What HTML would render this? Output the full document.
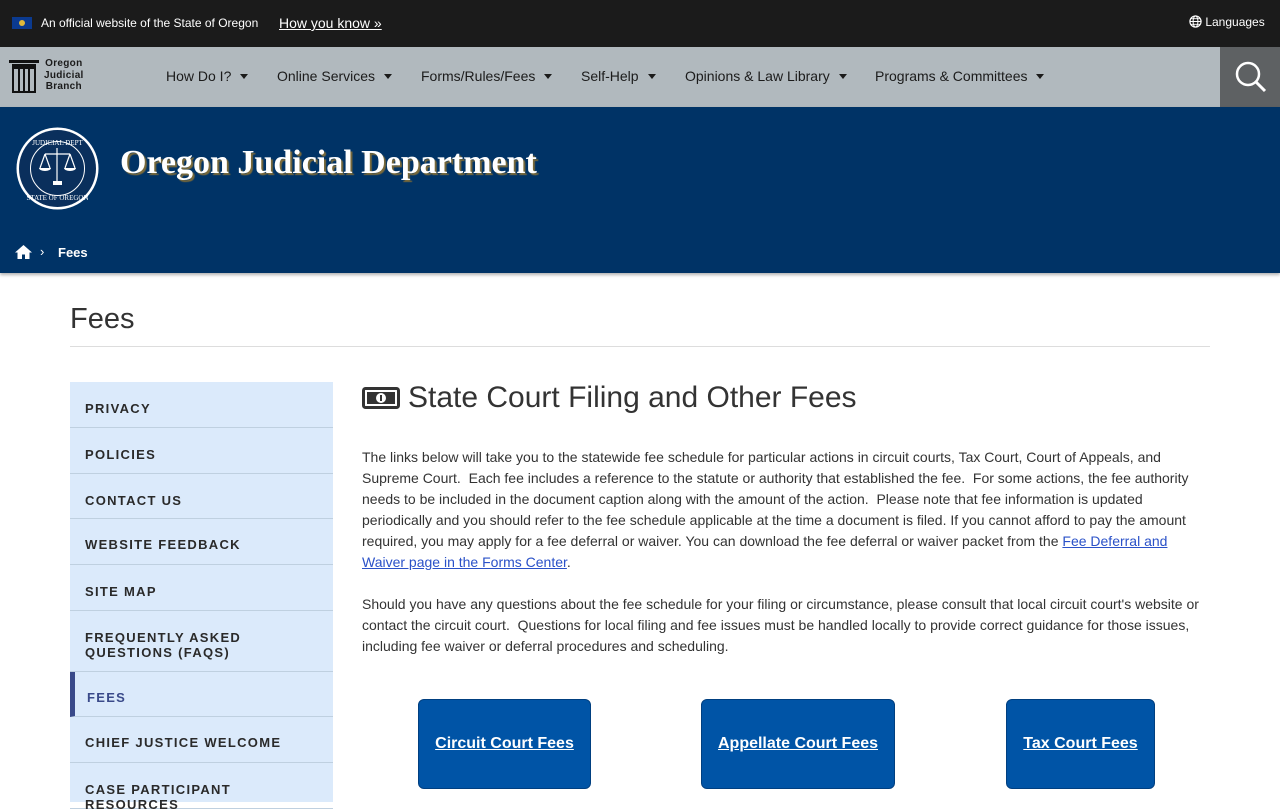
<!DOCTYPE html>
<html><head><meta charset="utf-8"><style>
*{box-sizing:border-box;margin:0;padding:0}
body{width:1280px;height:800px;overflow:hidden;font-family:"Liberation Sans",Arial,sans-serif;background:#fff;position:relative}
.top{position:absolute;left:0;top:0;width:1280px;height:47px;background:#1b1b1b;color:#fff;font-size:12px}
.nav{position:absolute;left:0;top:47px;width:1280px;height:60px;background:#b1b9be}
.nav .it{position:absolute;top:21px;font-size:14px;color:#1b1b1b}
.nav .it:after{content:"";display:inline-block;margin-left:9px;border-left:4.5px solid transparent;border-right:4.5px solid transparent;border-top:5px solid #1b1b1b;vertical-align:2px}
.hdr{position:absolute;left:0;top:107px;width:1280px;height:166px;background:#003366;box-shadow:0 2px 3px rgba(0,0,0,.3)}
.side{position:absolute;left:70px;top:382px;width:263px;height:420px;background:#dbeafb}
.side div{position:absolute;left:0;width:263px;border-bottom:1px solid #bfd0e0;font-size:13px;font-weight:bold;letter-spacing:1.3px;color:#2a2a2a;padding-left:15px}
p{font-size:14px;line-height:21px;color:#333}
a{color:#2a51c8}
.btn{position:absolute;top:699px;height:90px;background:#0054a6;border-radius:6px;color:#fff;font-weight:bold;font-size:16px;text-decoration:underline;display:flex;align-items:center;justify-content:center;border:1px solid #003f80}
</style></head><body>
<div class="top">
<div style="position:absolute;left:12px;top:17px;width:20px;height:12px;background:#0b3a8f"><div style="position:absolute;left:7px;top:3px;width:6px;height:6px;border-radius:50%;background:#e0b93a"></div></div>
<span style="position:absolute;left:41px;top:16px">An official website of the State of Oregon</span>
<span style="position:absolute;left:279px;top:15px;font-size:14px;text-decoration:underline">How you know »</span>
<span style="position:absolute;left:1189px;top:15px;font-size:12px"><svg width="13" height="13" viewBox="0 0 14 14" style="vertical-align:-2px"><circle cx="7" cy="7" r="6" fill="none" stroke="#fff" stroke-width="1.3"/><ellipse cx="7" cy="7" rx="2.6" ry="6" fill="none" stroke="#fff" stroke-width="1.1"/><path d="M1 7h12M2 4h10M2 10h10" stroke="#fff" stroke-width="1"/></svg> Languages</span>
</div>
<div class="nav">
<svg style="position:absolute;left:9px;top:13px" width="30" height="33" viewBox="0 0 30 33"><rect x="0" y="0" width="30" height="3" fill="#111"/><rect x="3" y="4" width="24" height="3" fill="#111"/><rect x="4" y="8" width="22" height="24" fill="none" stroke="#111" stroke-width="2"/><path d="M10 9v22M15 9v22M20 9v22" stroke="#111" stroke-width="2"/></svg>
<div style="position:absolute;left:44px;top:11px;font-size:10px;font-weight:bold;line-height:11.5px;text-align:center;color:#1b1b1b;letter-spacing:.3px">Oregon<br>Judicial<br>Branch</div>
<span class="it" style="left:166px">How Do I?</span>
<span class="it" style="left:277px">Online Services</span>
<span class="it" style="left:421px">Forms/Rules/Fees</span>
<span class="it" style="left:581px">Self-Help</span>
<span class="it" style="left:685px">Opinions &amp; Law Library</span>
<span class="it" style="left:875px">Programs &amp; Committees</span>
<div style="position:absolute;left:1220px;top:0;width:60px;height:60px;background:#5e6163"><svg width="60" height="60"><circle cx="28" cy="27" r="11" fill="none" stroke="#fff" stroke-width="2.5"/><path d="M36 35l9 9" stroke="#fff" stroke-width="3"/></svg></div>
</div>
<div class="hdr">
<svg style="position:absolute;left:15px;top:19px" width="85" height="85" viewBox="0 0 85 85"><circle cx="42.5" cy="42.5" r="41" fill="#fff"/><circle cx="42.5" cy="42.5" r="38.5" fill="#0a2f5c"/><circle cx="42.5" cy="42.5" r="27" fill="none" stroke="#fff" stroke-width="1"/><path d="M42 22v34M30 28h25M30 28l-5 14M30 28l5 14M55 28l-5 14M55 28l5 14" stroke="#fff" stroke-width="1.2" fill="none"/><path d="M24 42h12a6 3 0 0 1-12 0zM49 42h12a6 3 0 0 1-12 0z" fill="#fff"/><rect x="38" y="55" width="9" height="4" fill="#fff"/><text x="42.5" y="19" fill="#fff" font-size="7" text-anchor="middle" font-family="Liberation Serif">JUDICIAL DEPT</text><text x="42.5" y="74" fill="#fff" font-size="7" text-anchor="middle" font-family="Liberation Serif">STATE OF OREGON</text></svg>
<div style="position:absolute;left:120px;top:37px;font-family:'Liberation Serif',serif;font-weight:bold;font-size:34px;color:#fff;text-shadow:2px 2px 1px #7a6a3a">Oregon Judicial Department</div>
<svg style="position:absolute;left:15px;top:138px" width="17" height="14" viewBox="0 0 17 14"><path d="M8.5 0L0 7.5h2.5V14h4.5V9.5h3V14h4.5V7.5H17z" fill="#fff"/></svg>
<span style="position:absolute;left:40px;top:137px;color:#fff;font-size:13px">›</span>
<span style="position:absolute;left:58px;top:138px;color:#fff;font-size:13px;font-weight:bold">Fees</span>
</div>
<div style="position:absolute;left:70px;top:303px;font-size:29px;color:#333">Fees</div>
<div style="position:absolute;left:70px;top:346px;width:1140px;height:1px;background:#ddd"></div>
<div class="side">
<div style="top:0;height:46px;padding-top:19px">PRIVACY</div>
<div style="top:46px;height:46px;padding-top:19px">POLICIES</div>
<div style="top:92px;height:45px;padding-top:19px">CONTACT US</div>
<div style="top:137px;height:46px;padding-top:18px">WEBSITE FEEDBACK</div>
<div style="top:183px;height:46px;padding-top:19px">SITE MAP</div>
<div style="top:229px;height:61px;padding-top:19px;line-height:15px">FREQUENTLY ASKED<br>QUESTIONS (FAQS)</div>
<div style="top:290px;height:45px;padding-top:18px;color:#3a4a8a;border-left:5px solid #3a4a8a;padding-left:12px">FEES</div>
<div style="top:335px;height:46px;padding-top:18px">CHIEF JUSTICE WELCOME</div>
<div style="top:381px;height:46px;padding-top:19px;line-height:15px">CASE PARTICIPANT<br>RESOURCES</div>
</div>
<svg style="position:absolute;left:362px;top:387px" width="38" height="22" viewBox="0 0 38 22"><rect x="1.5" y="1.5" width="35" height="19" rx="2" fill="none" stroke="#333" stroke-width="3"/><rect x="5" y="5" width="28" height="12" fill="#333"/><ellipse cx="19" cy="11" rx="5" ry="5" fill="#fff"/><rect x="18" y="8" width="2" height="6" fill="#333"/></svg>
<div style="position:absolute;left:408px;top:381px;font-size:30px;color:#333">State Court Filing and Other Fees</div>
<p style="position:absolute;left:362px;top:447px;width:850px">The links below will take you to the statewide fee schedule for particular actions in circuit courts, Tax Court, Court of Appeals, and Supreme Court.&nbsp; Each fee includes a reference to the statute or authority that established the fee.&nbsp; For some actions, the fee authority needs to be included in the document caption along with the amount of the action.&nbsp; Please note that fee information is updated periodically and you should refer to the fee schedule applicable at the time a document is filed. If you cannot afford to pay the amount required, you may apply for a fee deferral or waiver. You can download the fee deferral or waiver packet from the <a href="#">Fee Deferral and Waiver page in the Forms Center</a>.</p>
<p style="position:absolute;left:362px;top:594px;width:850px">Should you have any questions about the fee schedule for your filing or circumstance, please consult that local circuit court's website or contact the circuit court.&nbsp; Questions for local filing and fee issues must be handled locally to provide correct guidance for those issues, including fee waiver or deferral procedures and scheduling.</p>
<div class="btn" style="left:418px;width:173px">Circuit Court Fees</div>
<div class="btn" style="left:701px;width:194px">Appellate Court Fees</div>
<div class="btn" style="left:1006px;width:149px">Tax Court Fees</div>
</body></html>
